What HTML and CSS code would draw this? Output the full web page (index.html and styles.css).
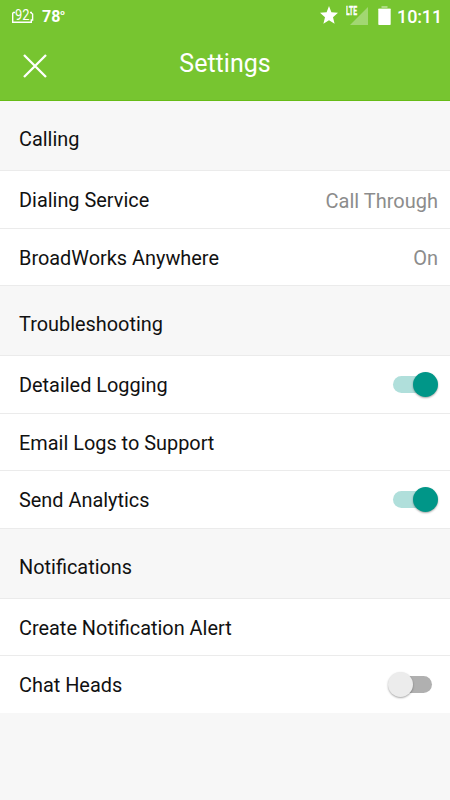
FILE: index.html
```html
<!DOCTYPE html>
<html lang="en">
<head>
    <meta charset="utf-8">
    <title>Settings</title>
    <link rel="stylesheet" href="styles.css">
</head>
<body>
    <header>
        <div class="status-bar">
            <svg class="battery-level" width="22" height="18" viewBox="0 0 22 18">
                <path d="M3 5.5H1.5L.7 6.3V15.2H19.3V13H20.6V7L19.3 6V5.5H18" fill="none" stroke="#fff" stroke-width="1.4"/>
                <text x="3" y="12.5" textLength="14.5" lengthAdjust="spacingAndGlyphs">92</text>
            </svg>
            <span class="temperature">78<sup>o</sup></span>
            <svg class="star" width="18" height="18" viewBox="0 0 18 18">
                <path d="M9 0L11.4 6.2L18 6.8L13 11.2L14.6 17.8L9 14.2L3.4 17.8L5 11.2L0 6.8L6.6 6.2Z" fill="#fff"/>
            </svg>
            <svg class="signal" width="23" height="20" viewBox="0 0 23 20">
                <path d="M22 2V20H4Z" fill="#fff" fill-opacity=".32"/>
                <text x="0" y="10" textLength="11" lengthAdjust="spacingAndGlyphs">LTE</text>
            </svg>
            <svg class="battery" width="13" height="19" viewBox="0 0 13 19">
                <path d="M3.5 0H9.5V2H12Q12.7 2 12.7 2.7V4H.3V2.7Q.3 2 1 2H3.5Z" fill="#fff" fill-opacity=".4"/>
                <path d="M.3 3H12.7V18.2Q12.7 19 12 19H1Q.3 19 .3 18.2Z" fill="#fff"/>
            </svg>
            <span class="clock">10:11</span>
        </div>
        <div class="title-bar">
            <svg class="close" width="24" height="24" viewBox="0 0 24 24">
                <path d="M1 1L23 23M23 1L1 23" stroke="#fff" stroke-width="2.3"/>
            </svg>
            <h1>Settings</h1>
        </div>
    </header>

    <main>
        <h2>Calling</h2>
        <div class="row"><span>Dialing Service</span><span class="value">Call Through</span></div>
        <div class="row"><span>BroadWorks Anywhere</span><span class="value">On</span></div>

        <h2>Troubleshooting</h2>
        <div class="row"><span>Detailed Logging</span><span class="switch on"></span></div>
        <div class="row"><span>Email Logs to Support</span></div>
        <div class="row"><span>Send Analytics</span><span class="switch on"></span></div>

        <h2>Notifications</h2>
        <div class="row"><span>Create Notification Alert</span></div>
        <div class="row last"><span>Chat Heads</span><span class="switch"></span></div>
    </main>
</body>
</html>
```
FILE: styles.css
```css
* {
    box-sizing: border-box;
}

body {
    margin: 0;
    height: 800px;
    overflow: hidden;
    background-color: #f7f7f7;
    color: #111;
    font-family: Roboto, sans-serif;
    font-size: 19.9px;
}

header {
    height: 101px;
    background-color: #77c530;
    border-bottom: 1px solid #66bb16;
    color: #fff;
}

.status-bar {
    display: flex;
    align-items: flex-start;
    height: 32px;
    padding: 0 8px 0 12px;
}

.battery-level {
    margin-top: 7px;
}

.battery-level text {
    fill: #fff;
    font-size: 14px;
}

.temperature {
    margin: 7px 0 0 8px;
    font-size: 16px;
    font-weight: 700;
    line-height: 19px;
}

.temperature sup {
    font-size: 8px;
    line-height: 0;
    vertical-align: 7px;
}

.star {
    margin: 6px 0 0 auto;
}

.signal {
    margin: 5px 0 0 8px;
}

.signal text {
    fill: #fff;
    stroke: #fff;
    stroke-width: 0.3px;
    font-size: 12px;
    font-weight: 700;
}

.battery {
    margin: 6px 0 0 9px;
}

.clock {
    margin: 6px 0 0 6px;
    font-size: 18px;
    font-weight: 500;
    line-height: 21px;
    letter-spacing: -0.15px;
}

.title-bar {
    display: grid;
    grid-template-columns: 60px 1fr 60px;
    align-items: start;
    padding-top: 17px;
}

.close {
    margin: 5px 0 0 23px;
}

h1 {
    margin: 0;
    font-size: 25px;
    font-weight: 400;
    line-height: 30px;
    text-align: center;
}

h2 {
    margin: 0;
    height: 70px;
    padding: 0 19px;
    border-bottom: 1px solid #ebebeb;
    font-size: 19.9px;
    font-weight: 400;
    line-height: 78px;
}

.row {
    display: flex;
    align-items: center;
    justify-content: space-between;
    height: 57.5px;
    padding: 3px 12px 0 19px;
    background-color: #fff;
    border-bottom: 1px solid #ebebeb;
}

.row.last {
    border-bottom-color: #f7f7f7;
}

.value {
    color: #8c8c8c;
    font-size: 20px;
}

.switch {
    position: relative;
    width: 39px;
    height: 17px;
    margin: -3px 6px 0 0;
    border-radius: 9px;
    background-color: #b0b0b0;
}

.switch::after {
    content: "";
    position: absolute;
    top: -4px;
    left: -5px;
    width: 25px;
    height: 25px;
    border-radius: 50%;
    background-color: #ececec;
    box-shadow: 0 1px 2px rgba(0, 0, 0, 0.35);
}

.switch.on {
    background-color: #b0dfdb;
}

.switch.on::after {
    left: 20px;
    background-color: #009688;
}
```
